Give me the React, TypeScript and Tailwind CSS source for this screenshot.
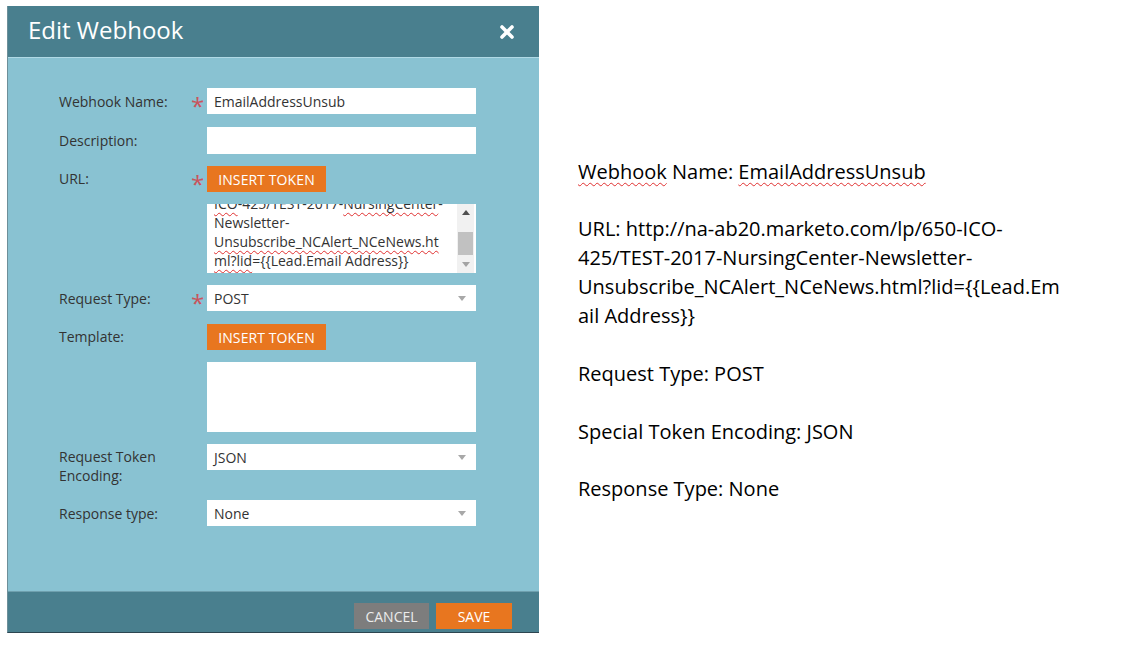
import React from "react";

const labelCls = "w-[131px] shrink-0 text-[14px] leading-[19px] text-[#333]";

function Star({ show }: { show?: boolean }) {
  return (
    <div className="w-[17px] h-[26px] shrink-0 flex justify-start overflow-visible">
      {show ? <span className="text-[#c9545c] text-[24px] leading-[24px] pt-[6px] pl-[1px] h-[26px]">*</span> : null}
    </div>
  );
}

function Arrow() {
  return (
    <svg width="8" height="5" viewBox="0 0 8 5" className="mr-[10px]">
      <path d="M0 0 L8 0 L4 5 Z" fill="#a8a8a8" />
    </svg>
  );
}

function Select({ value }: { value: string }) {
  return (
    <div className="w-[269px] h-[26px] bg-white flex items-center justify-between pl-[7px] text-[14px] text-[#333]">
      <span>{value}</span>
      <Arrow />
    </div>
  );
}

function TokenButton() {
  return (
    <div className="h-[26px] w-[119px] bg-[#e8761f] text-white text-[14px] flex items-center justify-center tracking-[0.1px]">
      INSERT TOKEN
    </div>
  );
}

const sq = "underline decoration-wavy decoration-[#e03030] decoration-1 underline-offset-[3px]";

export default function App() {
  return (
    <div className="w-[1121px] h-[650px] bg-white flex items-start" style={{ fontFamily: '"Open Sans", sans-serif' }}>
      {/* Dialog */}
      <div className="ml-[7px] mt-[6px] w-[532px] h-[627px] flex flex-col border-l border-[#6d8f99] border-b border-b-[#2c4550]">
        <div className="h-[51px] bg-[#497f8e] flex items-center justify-between pl-[20px] pr-[25px] shrink-0">
          <span className="text-white text-[24px] leading-none pb-[3px]">Edit Webhook</span>
          <svg width="14" height="14" viewBox="0 0 14 14">
            <path d="M2 2 L12 12 M12 2 L2 12" stroke="white" strokeWidth="3.6" strokeLinecap="round" />
          </svg>
        </div>
        <div className="flex-1 bg-[#89c2d2] border-t border-[#b0d9e5] pt-[30px] pl-[51px] flex flex-col gap-[12px]">
          {/* Webhook Name */}
          <div className="flex items-start">
            <div className={labelCls + " pt-[4px]"}>Webhook Name:</div>
            <Star show />
            <div className="w-[269px] h-[26px] bg-white flex items-center pl-[7px] text-[14px] text-[#333]">EmailAddressUnsub</div>
          </div>
          {/* Description */}
          <div className="flex items-start mt-[1px]">
            <div className={labelCls + " pt-[4px]"}>Description:</div>
            <Star />
            <div className="w-[269px] h-[27px] bg-white" />
          </div>
          {/* URL */}
          <div className="flex items-start">
            <div className={labelCls + " pt-[3px]"}>URL:</div>
            <Star show />
            <TokenButton />
          </div>
          <div className="flex items-start">
            <div className="w-[148px] shrink-0" />
            <div className="w-[269px] h-[69px] bg-white flex overflow-hidden">
              <div className="flex-1 overflow-hidden pl-[7px] text-[14px] leading-[19px] text-[#333]">
                <div className="-mt-[10px]">
                  <div className="whitespace-nowrap">
                    <span className={sq}>ICO</span>-425/TEST-2017-<span className={sq}>NursingCenter</span>-
                  </div>
                  <div>Newsletter-</div>
                  <div className="whitespace-nowrap">
                    <span className={sq}>Unsubscribe_NCAlert_NCeNews.ht</span>
                  </div>
                  <div className="whitespace-nowrap">
                    <span className={sq}>ml?lid</span>={"{{"}Lead.Email Address{"}}"}
                  </div>
                </div>
              </div>
              <div className="w-[17px] mr-[2px] bg-[#f1f1f1] flex flex-col items-center">
                <div className="h-[17px] flex items-center justify-center">
                  <svg width="8" height="5" viewBox="0 0 8 5"><path d="M0 5 L8 5 L4 0 Z" fill="#505050" /></svg>
                </div>
                <div className="mt-[11px] w-[15px] h-[23px] bg-[#c1c1c1]" />
                <div className="flex-1" />
                <div className="h-[17px] flex items-center justify-center">
                  <svg width="8" height="5" viewBox="0 0 8 5"><path d="M0 0 L8 0 L4 5 Z" fill="#a3a3a3" /></svg>
                </div>
              </div>
            </div>
          </div>
          {/* Request Type */}
          <div className="flex items-start">
            <div className={labelCls + " pt-[4px]"}>Request Type:</div>
            <Star show />
            <Select value="POST" />
          </div>
          {/* Template */}
          <div className="flex items-start mt-[1px]">
            <div className={labelCls + " pt-[3px]"}>Template:</div>
            <Star />
            <TokenButton />
          </div>
          <div className="flex items-start">
            <div className="w-[148px] shrink-0" />
            <div className="w-[269px] h-[70px] bg-white" />
          </div>
          {/* Request Token Encoding */}
          <div className="flex items-start">
            <div className={labelCls + " pt-[3px]"}>Request Token<br />Encoding:</div>
            <Star />
            <Select value="JSON" />
          </div>
          {/* Response type */}
          <div className="flex items-start mt-[3px]">
            <div className={labelCls + " pt-[4px]"}>Response type:</div>
            <Star />
            <Select value="None" />
          </div>
        </div>
        <div className="h-[41px] bg-[#497f8e] border-t border-[#6fa0ae] flex items-start pt-[11px] justify-end gap-[7px] pr-[27px] shrink-0">
          <div className="w-[75px] h-[26px] bg-[#7d7d7d] text-[#ececec] text-[14px] flex items-center justify-center">CANCEL</div>
          <div className="w-[76px] h-[26px] bg-[#e8761f] text-white text-[14px] flex items-center justify-center">SAVE</div>
        </div>
      </div>

      {/* Right text */}
      <div className="ml-[39px] mt-[157px] text-[20px] leading-[29px] text-black">
        <div>
          <span className={sq}>Webhook</span> Name: <span className={sq}>EmailAddressUnsub</span>
        </div>
        <div className="mt-[28px]">
          <div>URL: http://na-ab20.marketo.com/lp/650-ICO-</div>
          <div>425/TEST-2017-NursingCenter-Newsletter-</div>
          <div>Unsubscribe_NCAlert_NCeNews.html?lid={"{{"}Lead.Em</div>
          <div>ail Address{"}}"}</div>
        </div>
        <div className="mt-[29px]">Request Type: POST</div>
        <div className="mt-[29px]">Special Token Encoding: JSON</div>
        <div className="mt-[28px]">Response Type: None</div>
      </div>
    </div>
  );
}
